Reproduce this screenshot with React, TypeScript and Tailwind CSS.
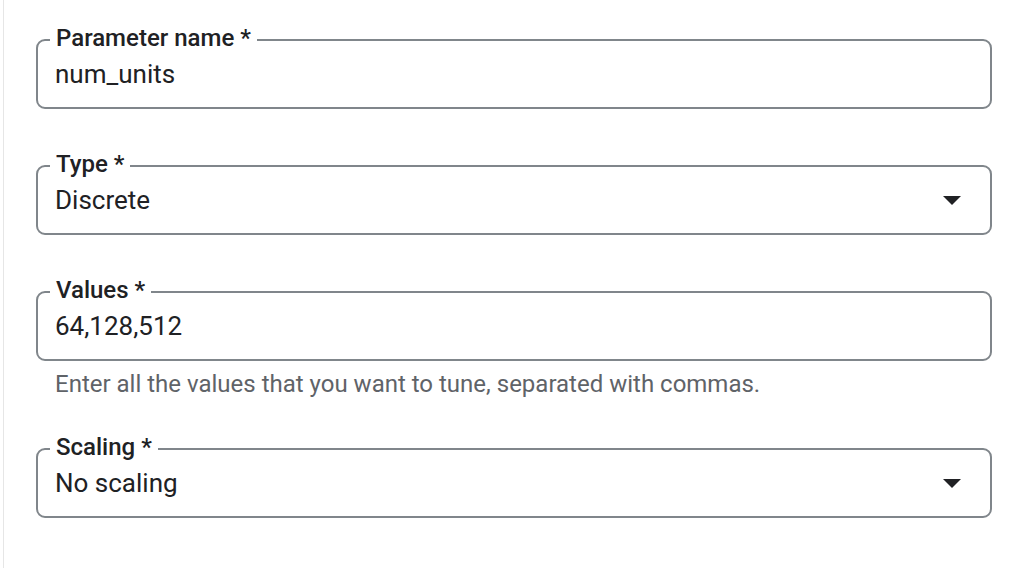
function Arrow() {
  return (
    <svg width="18" height="9" viewBox="0 0 18 9" className="shrink-0">
      <path d="M0 0 L18 0 L9 9 Z" fill="#202124" />
    </svg>
  );
}

interface FieldProps {
  label: string;
  value: string;
  select?: boolean;
  helper?: string;
  className?: string;
}

function Field({ label, value, select, helper, className }: FieldProps) {
  return (
    <div className={className}>
      <fieldset className="border-2 border-[#80868b] rounded-[9px] min-w-0 m-0 p-0 pb-[17px]">
        <legend className="ml-[12px] px-[6px] text-[24px] leading-[28px] font-medium text-[#202124]">
          <span className="relative -top-[2px]">{label}</span>
        </legend>
        <div className="flex items-center pl-[17px] pr-[29px] pt-[4px]">
          <span className="flex-1 text-[26px] leading-[32px] text-[#202124]">{value}</span>
          {select && <Arrow />}
        </div>
      </fieldset>
      {helper && (
        <div className="pl-[19px] pt-[9px] text-[24px] leading-[28px] text-[#5f6368]">{helper}</div>
      )}
    </div>
  );
}

export default function App() {
  return (
    <div
      className="w-[1022px] h-[568px] bg-white overflow-hidden"
      style={{ fontFamily: "Roboto, 'Liberation Sans', sans-serif" }}
    >
      <div className="ml-[3px] h-full border-l border-[#e6e6e6] pl-[32px] pr-[30px] pt-[26px] flex flex-col">
        <Field label="Parameter name *" value="num_units" />
        <Field label="Type *" value="Discrete" select className="mt-[43px]" />
        <Field
          label="Values *"
          value="64,128,512"
          helper="Enter all the values that you want to tune, separated with commas."
          className="mt-[43px]"
        />
        <Field label="Scaling *" value="No scaling" select className="mt-[37px]" />
      </div>
    </div>
  );
}
